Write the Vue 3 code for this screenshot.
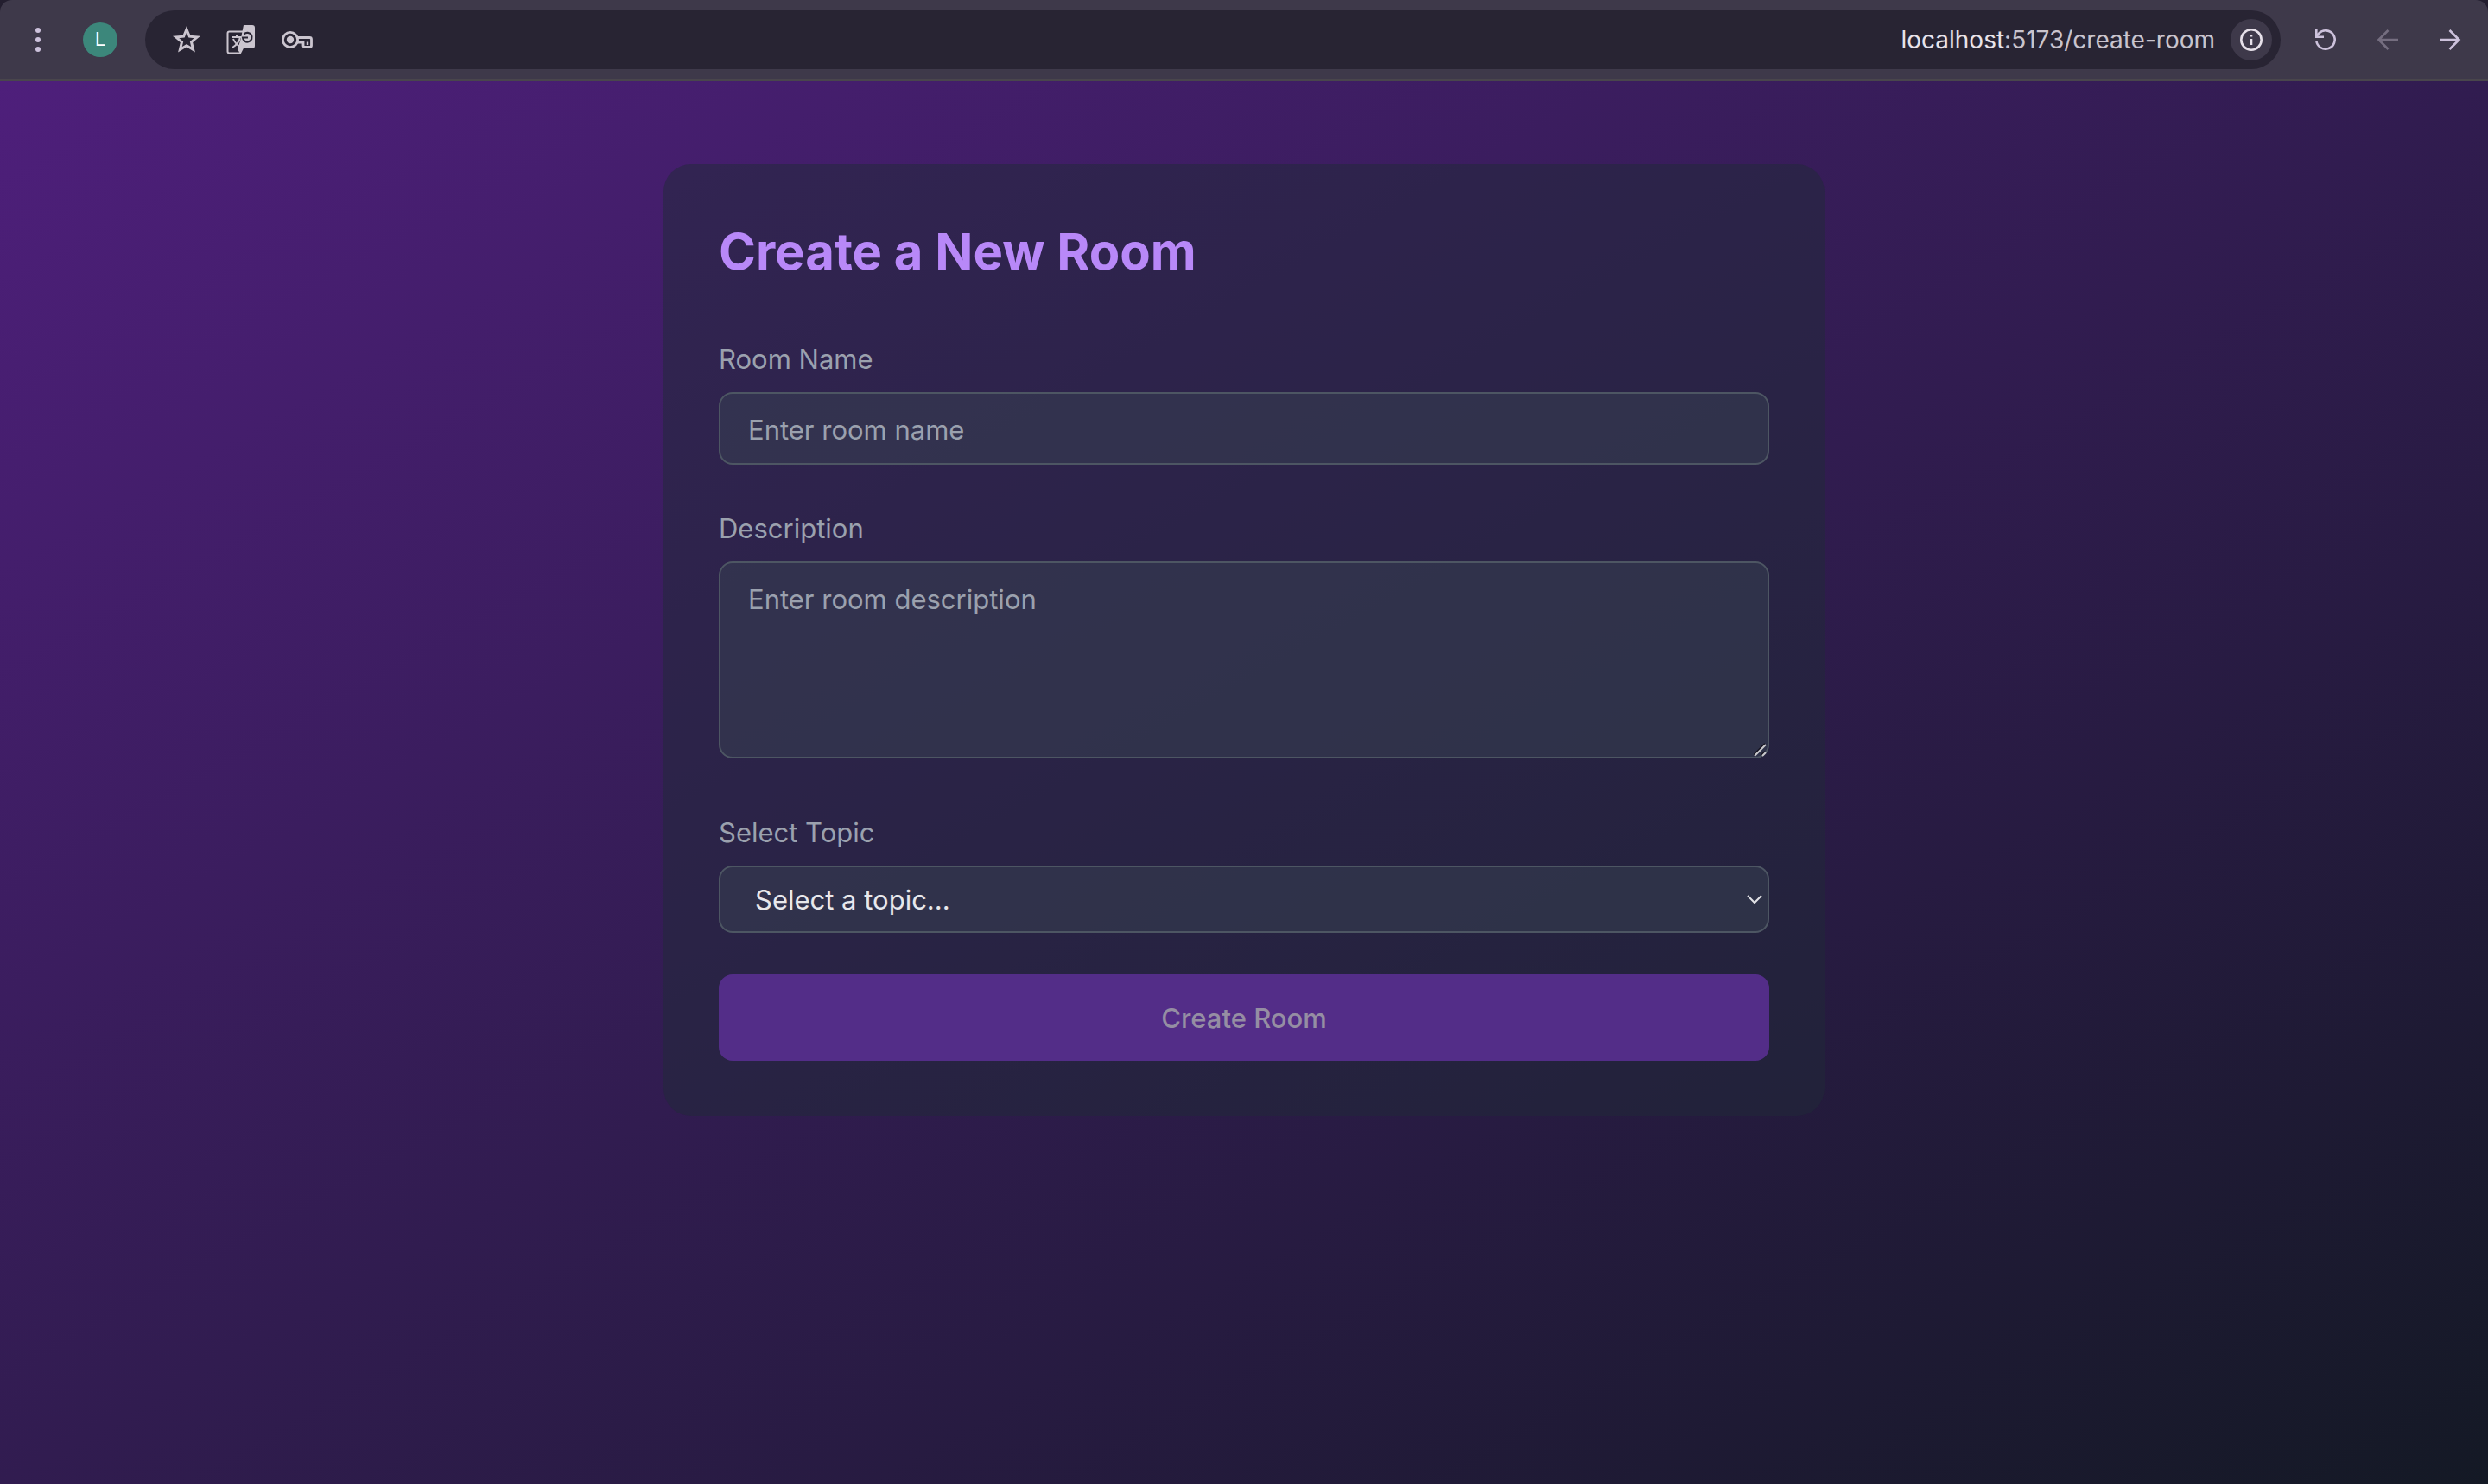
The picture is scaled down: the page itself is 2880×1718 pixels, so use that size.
<script setup>
import { ref } from 'vue'

const roomName = ref('')
const description = ref('')
const topic = ref('')
</script>

<template>
  <div class="window">
    <header class="toolbar">
      <div class="bar">
        <button class="icon-btn menu" type="button" aria-label="Menu">
          <svg width="8" height="32" viewBox="0 0 8 32" fill="#cdc2dc">
            <circle cx="4" cy="5" r="3" /><circle cx="4" cy="16" r="3" /><circle cx="4" cy="27" r="3" />
          </svg>
        </button>
        <button class="avatar" type="button" aria-label="Profile L">L</button>
        <div class="omnibox">
          <button class="icon-btn" type="button" aria-label="Bookmark">
            <svg width="32" height="32" viewBox="0 0 32 32" fill="none" stroke="#cbc5cf" stroke-width="3">
              <path d="M16 4l3.400 8.200 8.900.7-6.800 5.800 2.100 8.700-7.600-4.600-7.600 4.600 2.100-8.700-6.800-5.800 8.900-.7z" />
            </svg>
          </button>
          <button class="icon-btn" type="button" aria-label="Translate">
            <svg width="34" height="34" viewBox="0 0 34 34" fill="none" stroke="#cbc5cf" stroke-width="2">
              <path d="M19 7.500H3.500a2 2 0 0 0-2 2v21a2 2 0 0 0 2 2H16l3-6" />
              <path d="M6 14h12M12 11v3M8 16c2 5 4 7 8 9M16 14c-1 6-4 9-9 12" />
              <path d="M20 0h10a3 3 0 0 1 3 3v21a3 3 0 0 1-3 3H19l-3 5.500-3-4L17 15z" fill="#cbc5cf" stroke="none" />
              <path d="M20.500 10.500A5.300 5.300 0 1 1 19 14.500H25" stroke="#282433" stroke-width="2.200" />
            </svg>
          </button>
          <button class="icon-btn" type="button" aria-label="Passwords">
            <svg width="38" height="24" viewBox="0 0 38 24" fill="none" stroke="#cbc5cf" stroke-width="2.800">
              <circle cx="10" cy="12" r="8.600" /><circle cx="10" cy="12" r="4.200" fill="#cbc5cf" stroke="none" />
              <path d="M18 9.500h14.500a2 2 0 0 1 2 2v7a2 2 0 0 1-2 2H27a2 2 0 0 1-2-2V15h-7" />
              <path d="M30 14.500v3.500" stroke-width="2.400" />
            </svg>
          </button>
          <span class="url"><b>localhost</b>:5173/create-room</span>
          <button class="info" type="button" aria-label="Site information">
            <svg width="28" height="28" viewBox="0 0 28 28" fill="none" stroke="#e6e0e9" stroke-width="2.600">
              <circle cx="14" cy="14" r="11.700" /><path d="M14 13v7M14 8v2.600" />
            </svg>
          </button>
        </div>
        <nav class="nav">
          <button class="icon-btn" type="button" aria-label="Reload">
            <svg width="32" height="32" viewBox="0 0 32 32" fill="none" stroke="#cdc2dc" stroke-width="2.600">
              <path d="M5.300 17a10.700 10.700 0 1 0 3-8.500L5.500 12M5.300 4v8.700h8.700" />
            </svg>
          </button>
          <button class="icon-btn" type="button" aria-label="Back" disabled>
            <svg width="32" height="32" viewBox="0 0 32 32" fill="none" stroke="#756e80" stroke-width="2.600">
              <path d="M28 16H6M16.500 5L5.500 16l11 11" />
            </svg>
          </button>
          <button class="icon-btn" type="button" aria-label="Forward">
            <svg width="32" height="32" viewBox="0 0 32 32" fill="none" stroke="#cdc2dc" stroke-width="2.600">
              <path d="M4 16h22M15.500 5l11 11-11 11" />
            </svg>
          </button>
        </nav>
      </div>
    </header>

    <main class="page">
      <form class="card" @submit.prevent>
        <h1>Create a New Room</h1>
        <div class="field">
          <label for="room-name">Room Name</label>
          <input id="room-name" v-model="roomName" class="control" type="text" placeholder="Enter room name" />
        </div>
        <div class="field">
          <label for="description">Description</label>
          <div class="area">
            <textarea id="description" v-model="description" class="control" placeholder="Enter room description"></textarea>
            <svg class="grip" width="16" height="16" viewBox="0 0 16 16" fill="none">
              <path d="M0 14L13 1M9 14l4-4" stroke="#15131f" stroke-width="2" />
              <path d="M1 15L14 2M10 15l4-4" stroke="#c9c9cc" stroke-width="2" />
            </svg>
          </div>
        </div>
        <div class="field">
          <label for="topic">Select Topic</label>
          <div class="picker">
            <select id="topic" v-model="topic" class="control">
              <option value="">Select a topic...</option>
            </select>
            <svg class="chevron" width="18" height="12" viewBox="0 0 18 12" fill="none" stroke="#e2e2e6" stroke-width="2">
              <path d="M1 2l8 8 8-8" />
            </svg>
          </div>
        </div>
        <button class="submit" type="submit" disabled>Create Room</button>
      </form>
    </main>
  </div>
</template>

<style>
body {
  margin: 0;
  background: #231e2f;
}
</style>

<style scoped>
* {
  box-sizing: border-box;
}
.window {
  display: flex;
  flex-direction: column;
  min-height: 100vh;
  font-family: Inter, "Liberation Sans", sans-serif;
  font-size: 31px;
  line-height: 48px;
}
button {
  padding: 0;
  border: 0;
  background: none;
  font: inherit;
}
svg {
  display: block;
}
.bar {
  display: flex;
  align-items: center;
  height: 94px;
  padding: 0 28px 0 40px;
  border-bottom: 2px solid #49464c;
  border-radius: 14px 14px 0 0;
  background: #3e394a;
}
.avatar {
  width: 40px;
  height: 40px;
  margin: 0 32px 0 48px;
  border-radius: 50%;
  background: #3c877b;
  color: #fff;
  font: 22px/40px Roboto, sans-serif;
}
.omnibox {
  display: flex;
  flex: 1;
  align-items: center;
  gap: 30px;
  height: 68px;
  padding: 0 10px 0 32px;
  border-radius: 34px;
  background: #282433;
}
.url {
  margin-left: auto;
  margin-right: -12px;
  color: #c9c4ce;
  font-size: 28px;
}
.url b {
  color: #e8e3ea;
  font-weight: 400;
}
.info {
  display: grid;
  place-items: center;
  width: 48px;
  height: 48px;
  border-radius: 50%;
  background: #3e394a;
}
.nav {
  display: flex;
  gap: 40px;
  margin-left: 36px;
}
.page {
  flex: 1;
  padding: 96px 32px;
  background: linear-gradient(to bottom right, #4e1f7b, #141925);
}
.card {
  display: flex;
  flex-direction: column;
  gap: 48px;
  max-width: 1344px;
  margin: 0 auto;
  padding: 64px;
  border-radius: 32px;
  background: rgba(32, 41, 55, 0.5);
}
h1 {
  margin: 0 0 14px;
  color: #b888f8;
  font-size: 58px;
  font-weight: 700;
  line-height: 74px;
}
.field {
  display: flex;
  flex-direction: column;
  gap: 16px;
}
label {
  padding-top: 4px;
  color: #9ba1ae;
  line-height: 44px;
}
.control {
  display: block;
  width: 100%;
  margin: 0;
  padding: 18px 32px 16px;
  border: 2px solid #4d5663;
  border-radius: 16px;
  outline: 0;
  background: rgba(56, 66, 82, 0.5);
  color: #e8e8ec;
  font: inherit;
}
input.control {
  height: 84px;
}
.control::placeholder {
  color: #9ba1ae;
  opacity: 1;
}
.area,
.picker {
  display: grid;
}
.area > *,
.picker > * {
  grid-area: 1 / 1;
}
.area {
  margin-bottom: 12px;
}
textarea.control {
  height: 228px;
  resize: none;
}
.grip {
  place-self: end;
  margin: 2px;
  pointer-events: none;
}
select.control {
  height: 78px;
  padding: 2px 40px 0;
  appearance: none;
}
.chevron {
  place-self: center end;
  margin-right: 8px;
  pointer-events: none;
}
.submit {
  height: 100px;
  padding-top: 2px;
  border-radius: 16px;
  background: #532d88;
  color: #958ea3;
  font-weight: 500;
}
</style>
